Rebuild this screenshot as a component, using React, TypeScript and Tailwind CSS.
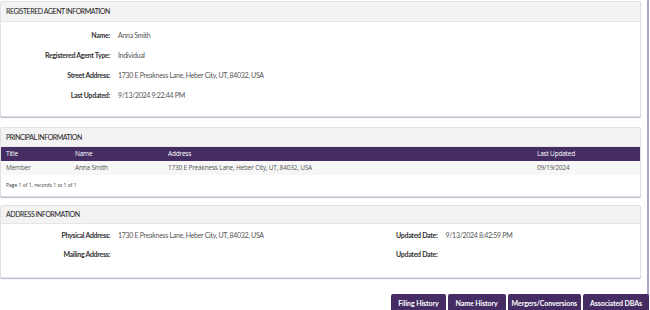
const font = { fontFamily: "Lato, 'Open Sans', sans-serif" };

export default function App() {
  return (
    <div className="w-[650px] h-[310px] overflow-hidden bg-white text-[#444]" style={font}>
      <div className="w-[649px] h-[310px] border-r-2 border-[#aaa3c2] pr-[6px] pt-px flex flex-col">
        <Panel title="REGISTERED AGENT INFORMATION" headH="h-[20px]">
          <div className="pt-[3px] pb-[11px]">
            <Field label="Name:" value="Anna Smith" />
            <Field label="Registered Agent Type:" value="Individual" />
            <Field label="Street Address:" value="1730 E Preakness Lane, Heber City, UT, 84032, USA" />
            <Field label="Last Updated:" value="9/13/2024 9:22:44 PM" />
          </div>
        </Panel>

        <div className="h-[10px] shrink-0" />
        <Panel title="PRINCIPAL INFORMATION" headH="h-[19px]">
          <div className="text-[6.5px] tracking-[-0.2px]" style={{ fontFamily: "'Open Sans', Lato, sans-serif" }}>
            <div className="h-[14px] bg-[#452d64] text-white flex items-center">
              <span className="w-[74px] pl-[5px]">Title</span>
              <span className="w-[93px]">Name</span>
              <span className="w-[369px]">Address</span>
              <span>Last Updated</span>
            </div>
            <div className="h-[14px] bg-[#f7f7f7] text-[#555] flex items-center">
              <span className="w-[74px] pl-[5px]">Member</span>
              <span className="w-[93px]">Anna Smith</span>
              <span className="w-[369px]">1730 E Preakness Lane, Heber City, UT, 84032, USA</span>
              <span>09/19/2024</span>
            </div>
            <div className="h-[21px] flex items-center pl-[5px] text-[5px] tracking-normal text-[#333]">
              Page 1 of 1, records 1 to 1 of 1
            </div>
          </div>
        </Panel>

        <div className="h-[8px] shrink-0" />
        <Panel title="ADDRESS INFORMATION" headH="h-[18px]">
          <div className="grid grid-cols-2 pt-[2px] pb-[13px]">
            <div>
              <Field label="Physical Address:" value="1730 E Preakness Lane, Heber City, UT, 84032, USA" rowH="h-[19px]" />
              <Field label="Mailing Address:" value="" rowH="h-[19px]" />
            </div>
            <div>
              <Field label="Updated Date:" value="9/13/2024 8:42:59 PM" rowH="h-[19px]" labelW="w-[117px]" />
              <Field label="Updated Date:" value="" rowH="h-[19px]" labelW="w-[117px]" />
            </div>
          </div>
        </Panel>

        <div className="flex justify-end gap-[2px] mt-[16px] -mr-[8px] shrink-0">
          <Btn>Filing History</Btn>
          <Btn px="px-[8px]">Name History</Btn>
          <Btn px="px-[4px]">Mergers/Conversions</Btn>
          <Btn>Associated DBAs</Btn>
        </div>
      </div>
    </div>
  );
}

function Panel({
  title,
  children,
  headH = "h-[21px]",
}: {
  title: string;
  children: React.ReactNode;
  headH?: string;
}) {
  return (
    <div className="shrink-0 border border-[#e0e1e6] rounded-[2px] shadow-[0_1px_1px_rgba(90,100,140,0.45)] bg-white">
      <div className={`${headH} bg-[#f3f3f3] border-b border-[#e6e6e6] flex items-center pl-[5px] text-[7px] text-[#222] tracking-[-0.45px]`}>
        {title}
      </div>
      {children}
    </div>
  );
}

function Field({
  label,
  value,
  rowH = "h-[20px]",
  labelW = "w-[109px]",
}: {
  label: string;
  value: string;
  rowH?: string;
  labelW?: string;
}) {
  return (
    <div className={`${rowH} flex items-center text-[7px] tracking-[-0.3px]`}>
      <span className={`${labelW} text-right font-bold text-[#333] shrink-0`}>{label}</span>
      <span className="pl-[8px] text-[#555]">{value}</span>
    </div>
  );
}

function Btn({ children, px = "px-[7px]" }: { children: React.ReactNode; px?: string }) {
  return (
    <button className={`h-[19px] shrink-0 ${px} bg-[#452d64] text-white text-[7px] font-bold tracking-[-0.1px] rounded-t-[2px]`} style={font}>
      {children}
    </button>
  );
}
